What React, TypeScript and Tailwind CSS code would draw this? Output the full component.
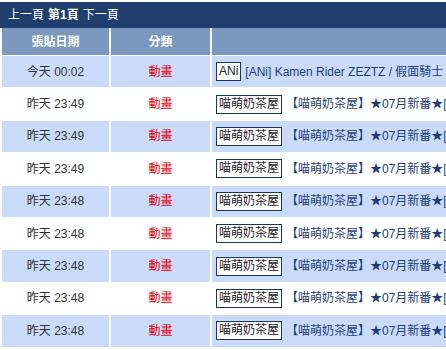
import React from 'react';

const rows = [
  { date: '今天 00:02', tag: 'ANi', title: '[ANi] Kamen Rider ZEZTZ / 假面騎士 ZEZTZ - 01 [1080P][Baha][WEB-DL]' },
  { date: '昨天 23:49', tag: '喵萌奶茶屋', title: '【喵萌奶茶屋】★07月新番★[夏日口袋 / Summer Pockets][14][1080p][繁日雙語]' },
  { date: '昨天 23:49', tag: '喵萌奶茶屋', title: '【喵萌奶茶屋】★07月新番★[夏日口袋 / Summer Pockets][14][1080p][簡日雙語]' },
  { date: '昨天 23:49', tag: '喵萌奶茶屋', title: '【喵萌奶茶屋】★07月新番★[夏日口袋 / Summer Pockets][14][720p][繁日雙語]' },
  { date: '昨天 23:48', tag: '喵萌奶茶屋', title: '【喵萌奶茶屋】★07月新番★[夏日口袋 / Summer Pockets][14][720p][簡日雙語]' },
  { date: '昨天 23:48', tag: '喵萌奶茶屋', title: '【喵萌奶茶屋】★07月新番★[夏日口袋 / Summer Pockets][13][1080p][繁日雙語]' },
  { date: '昨天 23:48', tag: '喵萌奶茶屋', title: '【喵萌奶茶屋】★07月新番★[夏日口袋 / Summer Pockets][13][1080p][簡日雙語]' },
  { date: '昨天 23:48', tag: '喵萌奶茶屋', title: '【喵萌奶茶屋】★07月新番★[夏日口袋 / Summer Pockets][13][720p][繁日雙語]' },
  { date: '昨天 23:48', tag: '喵萌奶茶屋', title: '【喵萌奶茶屋】★07月新番★[夏日口袋 / Summer Pockets][13][720p][簡日雙語]' },
];

export default function App() {
  return (
    <div
      className="w-[446px] h-[350px] overflow-hidden bg-white pt-[2px] text-[12px] whitespace-nowrap"
      style={{ fontFamily: '"Liberation Sans", Arial, "Noto Sans CJK TC", sans-serif' }}
    >
      {/* page nav */}
      <div className="h-[26px] bg-[#213f6e] text-white pl-[8px] flex items-center gap-[4px]">
        <span>上一頁</span>
        <b>第1頁</b>
        <span>下一頁</span>
      </div>

      <div className="pl-[2px] grid grid-cols-[107px_99px_420px] gap-x-[2px] gap-y-px">
        {/* header */}
        <div className="h-[27px] bg-[#7b98c0] text-white font-bold flex items-center justify-center">張貼日期</div>
        <div className="h-[27px] bg-[#7b98c0] text-white font-bold flex items-center justify-center">分類</div>
        <div className="h-[27px] bg-[#7b98c0]"></div>

        {rows.map((r, i) => {
          const bg = i % 2 === 0 ? 'bg-[#c9dbf8]' : 'bg-white';
          return (
            <React.Fragment key={i}>
              <div className={`h-[31.4px] ${bg} text-[#333] flex items-center justify-center`}>{r.date}</div>
              <div className={`h-[31.4px] ${bg} text-[#e8000b] flex items-center justify-center`}>動畫</div>
              <div className={`h-[31.4px] ${bg} flex items-center pl-[4px] overflow-hidden`}>
                <span className="border border-[#1d3461] bg-white text-[#222] px-[2px] leading-[17px]">{r.tag}</span>
                <span className="ml-[4px] text-[#1f3d78]">{r.title}</span>
              </div>
            </React.Fragment>
          );
        })}
      </div>
    </div>
  );
}
